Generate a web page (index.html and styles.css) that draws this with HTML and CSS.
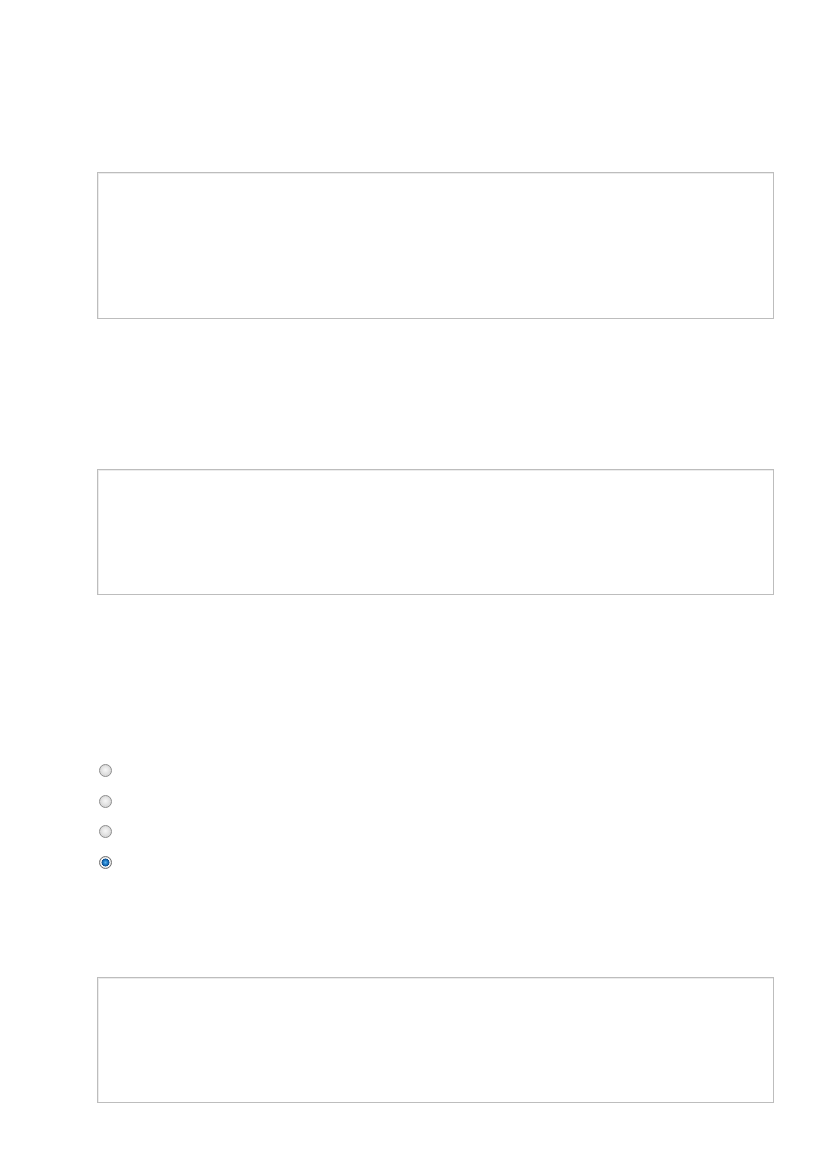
FILE: index.html
```
<!DOCTYPE html>
<html lang="en">
<head>
    <meta charset="UTF-8">
    <meta name="viewport" content="width=device-width, initial-scale=1.0">
    <title>Form</title>
    <link rel="stylesheet" href="styles.css">
</head>
<body>
    <div class="page">
        <textarea class="field field-tall"></textarea>
        <textarea class="field field-mid"></textarea>

        <div class="choices">
            <label class="choice"><input type="radio" name="pick"></label>
            <label class="choice"><input type="radio" name="pick"></label>
            <label class="choice"><input type="radio" name="pick"></label>
            <label class="choice"><input type="radio" name="pick" checked></label>
        </div>

        <textarea class="field field-last"></textarea>
    </div>
</body>
</html>
```

FILE: styles.css
```
body {
    margin: 0;
    background-color: #fff;
    font-family: "Liberation Sans", Arial, sans-serif;
    color: #333;
}

.page {
    padding: 172px 0 0 97px;
    width: 678px;
}

.field {
    display: block;
    box-sizing: border-box;
    width: 677px;
    margin: 0;
    padding: 6px;
    border: 1px solid #bdbdbd;
    box-shadow: inset 1px 1px 0 #ececec;
    background-color: #fff;
    resize: none;
    outline: none;
}

.field-tall {
    height: 147px;
}

.field-mid {
    height: 126px;
    margin-top: 150px;
}

.field-last {
    height: 126px;
    margin-top: 108px;
}

.choices {
    display: flex;
    flex-direction: column;
    gap: 17.5px;
    margin-top: 169px;
    padding-left: 2px;
}

.choice {
    display: flex;
    height: 13px;
}

.choice input {
    appearance: none;
    -webkit-appearance: none;
    width: 13px;
    height: 13px;
    margin: 0;
    border-radius: 50%;
    border: 1px solid #8c8c8c;
    background: radial-gradient(circle at 50% 45%, #f7f7f7 0, #e6e6e6 40%, #c9c9c9 100%);
    box-shadow: inset 0 0 0 1px #dcdcdc;
    box-sizing: border-box;
}

.choice input:checked {
    border-color: #6f6f6f;
    background: radial-gradient(circle at 50% 50%, #5fb4ee 0, #1f7dc9 2px, #0d4a87 3.8px, #ffffff 4.2px, #f1f1f1 4.7px, #b9b9b9 100%);
    box-shadow: none;
}
```
